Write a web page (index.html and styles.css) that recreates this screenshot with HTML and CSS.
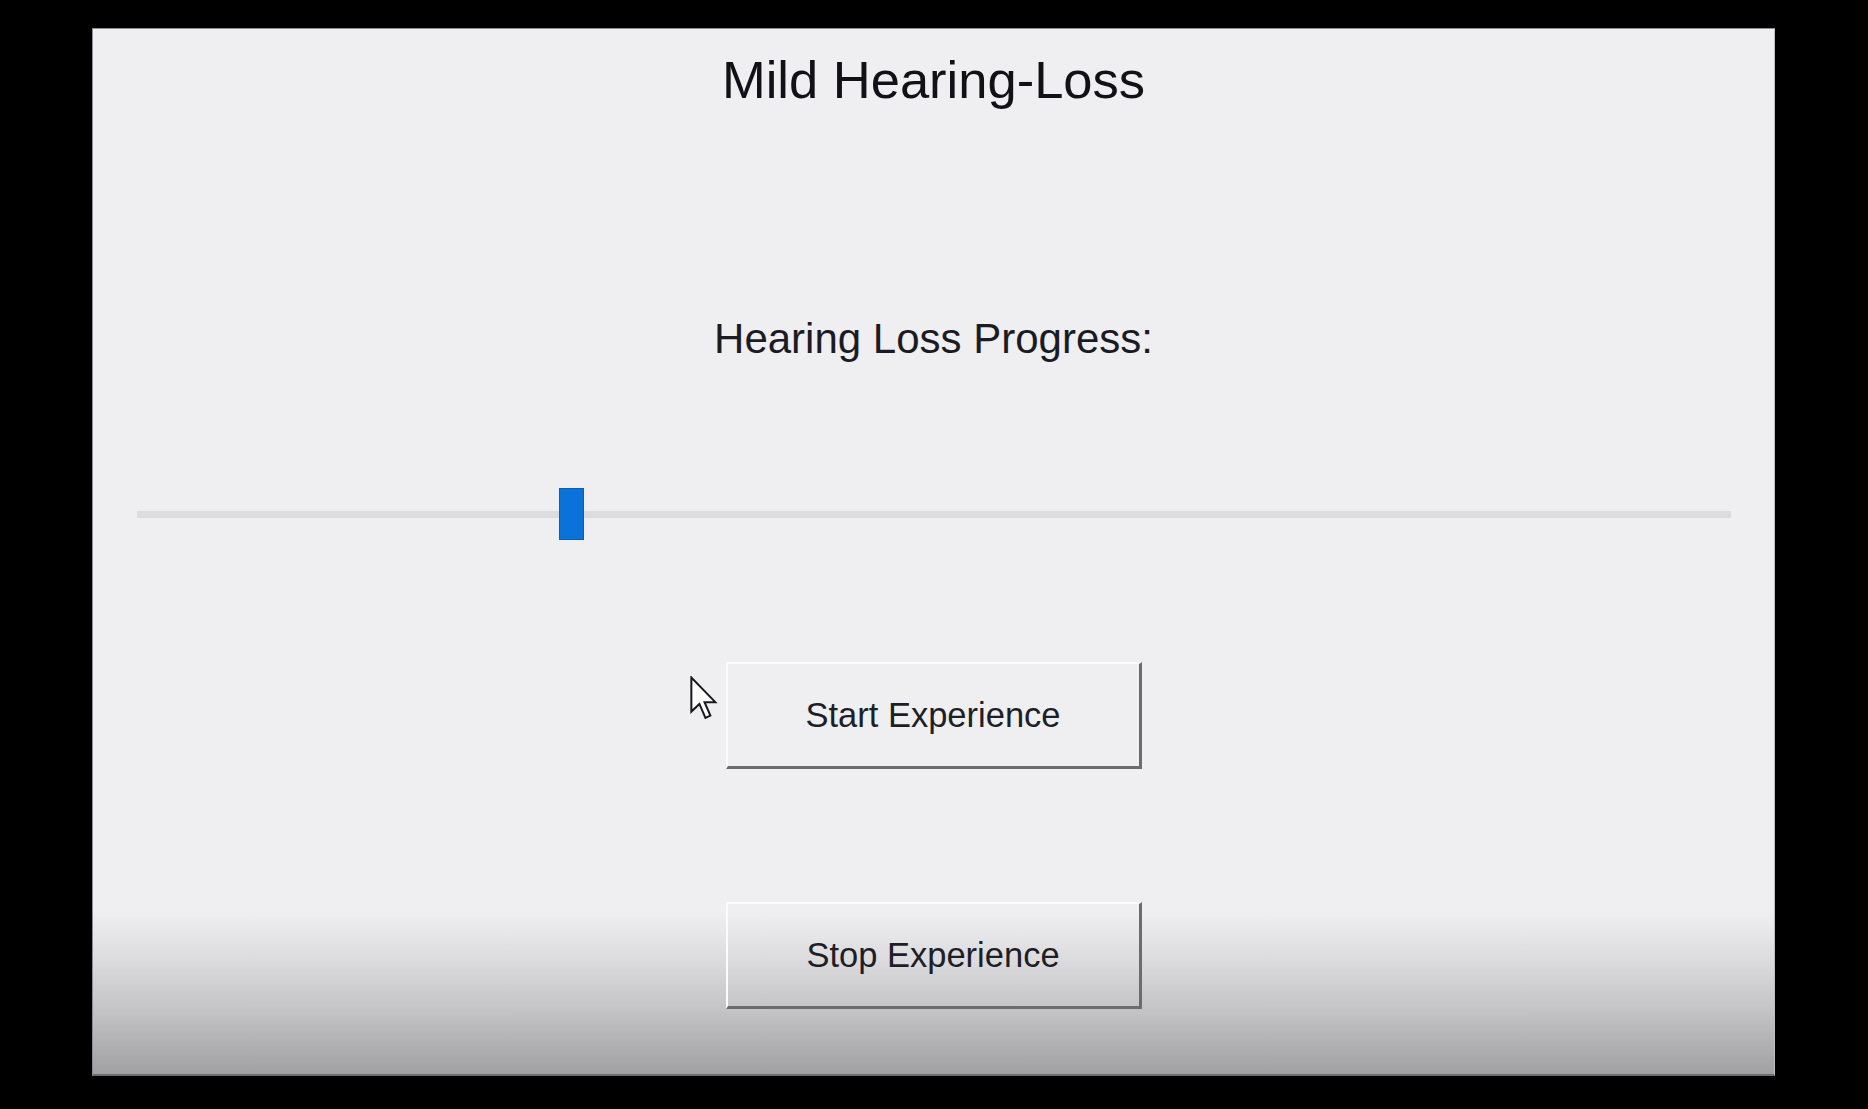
FILE: index.html
```html
<!DOCTYPE html>
<html>
<head>
<meta charset="utf-8">
<title>Mild Hearing-Loss</title>
<link rel="stylesheet" href="styles.css">
</head>
<body>
<div class="panel">
  <h1 class="title">Mild Hearing-Loss</h1>
  <div class="label">Hearing Loss Progress:</div>
  <div class="slider">
    <div class="track"></div>
    <div class="thumb" style="left: 26.5%"></div>
  </div>
  <button class="btn btn-start">Start Experience</button>
  <button class="btn btn-stop">Stop Experience</button>
  <svg class="cursor" width="28" height="44" viewBox="0 0 12.5 19.5">
    <path d="M0.6 0.6 L0.6 15.8 L4.2 12.4 L6.9 18.6 L9.1 17.6 L6.5 11.6 L11.3 11.6 Z" fill="#ffffff" stroke="#1a1a1a" stroke-width="0.9" stroke-linejoin="miter"/>
  </svg>
</div>
</body>
</html>
```

FILE: styles.css
```css
html, body {
  margin: 0;
  padding: 0;
  background: #000000;
}

body {
  width: 1868px;
  height: 1109px;
  overflow: hidden;
  font-family: "Liberation Sans", Arial, sans-serif;
}

.panel {
  position: relative;
  box-sizing: border-box;
  margin: 28px 0 0 92px;
  width: 1683px;
  height: 1048px;
  border: 1px solid #8e8e90;
  border-right-color: #bdbcbf;
  border-bottom: 2px solid #6e6e70;
  background: linear-gradient(to bottom, #efeef1 0%, #efeef1 84.5%, #dcdbde 89%, #c3c2c5 94%, #a09fa2 100%);
  display: flex;
  flex-direction: column;
  align-items: center;
  padding-top: 21px;
}

.title {
  margin: 0;
  font-size: 52.5px;
  line-height: 60px;
  font-weight: normal;
  color: #121216;
}

.label {
  margin-top: 205px;
  font-size: 42px;
  line-height: 48px;
  color: #1b1b24;
}

.slider {
  position: relative;
  margin-top: 125px;
  width: 1594px;
  height: 52px;
  display: flex;
  align-items: center;
}

.track {
  width: 100%;
  height: 7px;
  background: #dcdbdd;
}

.thumb {
  position: absolute;
  top: 0;
  width: 25px;
  height: 52px;
  box-sizing: border-box;
  background: #0b72d9;
  border: 1px solid #0a5fb4;
}

.btn {
  box-sizing: border-box;
  width: 416px;
  height: 107px;
  padding: 0;
  background: transparent;
  border-style: solid;
  border-width: 2px 3px 3px 2px;
  border-color: #fbfbfc #6c6c6e #6c6c6e #fbfbfc;
  font-family: "Liberation Sans", Arial, sans-serif;
  font-size: 34.5px;
  color: #1e1e26;
}

.btn-start {
  margin-top: 122px;
}

.btn-stop {
  margin-top: 133px;
}

.cursor {
  position: absolute;
  left: 597px;
  top: 647px;
}
```
